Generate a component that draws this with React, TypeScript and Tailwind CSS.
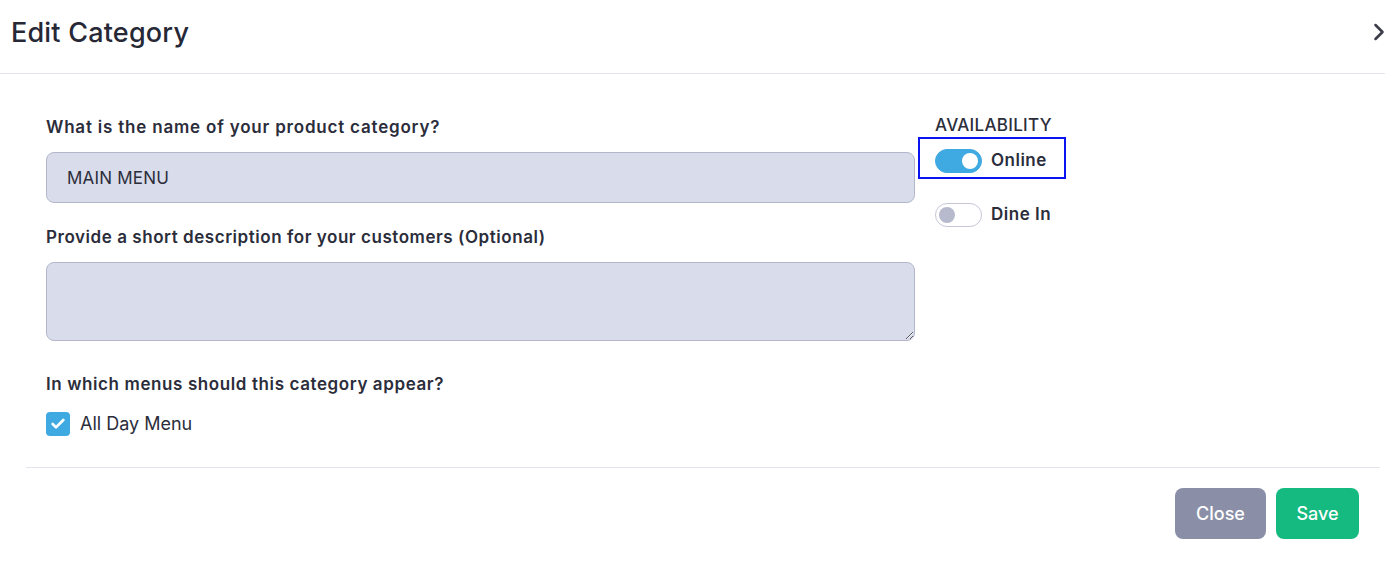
import React, { useState } from 'react'
import { ChevronRight, Check } from 'lucide-react'

const Toggle = ({ on, onClick }: { on: boolean; onClick: () => void }) => (
  <button
    onClick={onClick}
    className={`relative h-[24px] w-[47px] shrink-0 rounded-full border ${
      on ? 'border-[#3fa9e2] bg-[#3fa9e2]' : 'border-[#c5c7d6] bg-white'
    }`}
  >
    <span
      className={`absolute top-[3px] h-[16px] w-[16px] rounded-full ${
        on ? 'left-[26px] bg-white' : 'left-[3px] bg-[#b7b9cc]'
      }`}
    />
  </button>
)

export default function App() {
  const [online, setOnline] = useState(true)
  const [dineIn, setDineIn] = useState(false)
  const [allDay, setAllDay] = useState(true)

  return (
    <div className="h-[563px] w-[1385px] bg-white text-[#2b2d3b] font-['Inter','Noto_Sans',sans-serif]">
      {/* Header */}
      <div className="flex h-[74px] items-center justify-between border-b border-[#e3e4ec] pl-[11px] pr-0">
        <h1 className="pb-[6px] text-[27px] font-medium tracking-[0.2px] text-[#262836]">Edit Category</h1>
        <ChevronRight className="mb-[10px] mr-[-8px] h-[28px] w-[28px] text-[#3a3c48]" strokeWidth={2.2} />
      </div>

      {/* Body */}
      <div className="flex gap-[20px] pl-[46px] pt-[40px]">
        <div className="w-[869px]">
          <label className="block text-[17px] font-semibold leading-[26px] tracking-[0.8px]">
            What is the name of your product category?
          </label>
          <input
            defaultValue="MAIN MENU"
            className="mt-[12px] block h-[51px] w-full rounded-[8px] border border-[#b4b7cc] bg-[#d9dcea] px-[20px] text-[17px] tracking-[0.2px] text-[#2b2d3b] outline-none"
          />

          <label className="mt-[21px] block text-[17px] font-semibold leading-[26px] tracking-[0.55px]">
            Provide a short description for your customers (Optional)
          </label>
          <textarea className="mt-[12px] block h-[79px] w-full rounded-[8px] border border-[#b4b7cc] bg-[#d9dcea] px-[20px] py-[12px] text-[17px] outline-none" />

          <label className="mt-[30px] block text-[17px] font-semibold leading-[26px] tracking-[0.6px]">
            In which menus should this category appear?
          </label>
          <div className="mt-[13px] flex items-center gap-[10px]">
            <button
              onClick={() => setAllDay(!allDay)}
              className={`flex h-[24px] w-[24px] items-center justify-center rounded-[4px] ${
                allDay ? 'bg-[#3fa9e2]' : 'border border-[#b4b7cc] bg-white'
              }`}
            >
              {allDay && <Check className="h-[16px] w-[16px] text-white" strokeWidth={4} />}
            </button>
            <span className="text-[18px] text-[#2b2d3b]">All Day Menu</span>
          </div>
        </div>

        <div>
          <div className="text-[17px] font-medium uppercase leading-[22px] tracking-[0.3px]">Availability</div>
          <div className="ml-[-17px] mt-[1px] flex h-[42px] w-[148px] items-center gap-[9px] border-2 border-[#0a14f0] pl-[15px] pt-[6px]">
            <Toggle on={online} onClick={() => setOnline(!online)} />
            <span className="text-[17px] font-semibold tracking-[0.5px]">Online</span>
          </div>
          <div className="mt-[23px] flex items-center gap-[9px]">
            <Toggle on={dineIn} onClick={() => setDineIn(!dineIn)} />
            <span className="text-[17px] font-semibold tracking-[0.5px]">Dine In</span>
          </div>
        </div>
      </div>

      {/* Footer */}
      <div className="ml-[26px] mr-[5px] mt-[30px] border-t border-[#e3e4ec]" />
      <div className="flex justify-end gap-[10px] pr-[26px] pt-[20px]">
        <button className="h-[51px] w-[91px] rounded-[8px] bg-[#8a8fa7] text-[18px] font-medium text-white">
          Close
        </button>
        <button className="h-[51px] w-[83px] rounded-[8px] bg-[#14ba80] text-[18px] font-medium text-white">
          Save
        </button>
      </div>
    </div>
  )
}
